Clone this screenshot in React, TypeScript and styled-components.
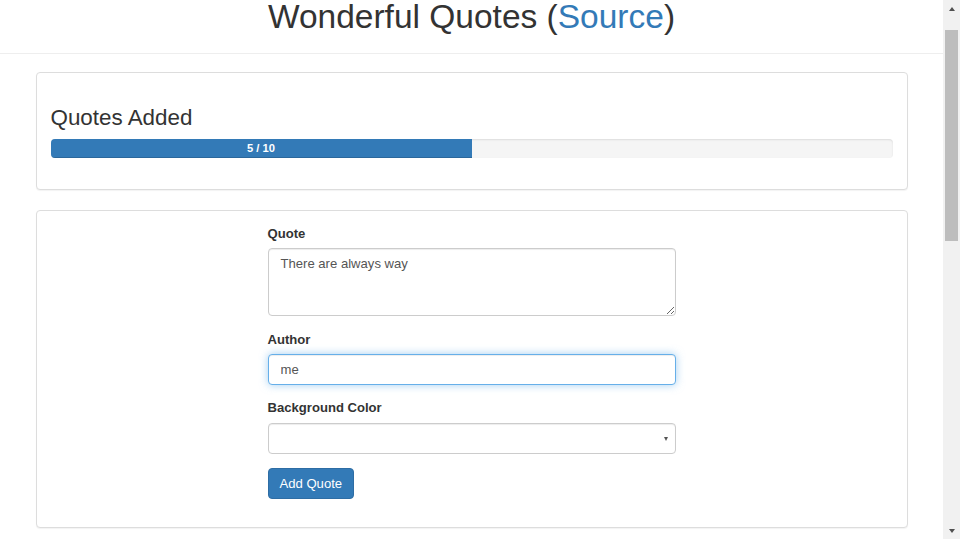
import React from 'react';
import styled, { createGlobalStyle, css } from 'styled-components';

const GlobalStyle = createGlobalStyle`
	html, body {
		margin: 0;
		padding: 0;
		height: 100%;
		overflow: hidden;
		background: #fff;
	}

	body {
		font-family: "Liberation Sans", Arial, sans-serif;
		font-size: 13.1px;
		line-height: 1.42857;
		color: #333;
	}

	#root {
		height: 100%;
	}

	*, *::before, *::after {
		box-sizing: border-box;
	}
`;

const Window = styled.div`
	display: flex;
	height: 100%;
`;

const Viewport = styled.div`
	flex: 1;
	min-width: 0;
	overflow: hidden;
`;

// the page in the shot is a bit scrolled, so draw the browser bar ourselves
const ScrollBar = styled.div`
	display: flex;
	flex-direction: column;
	width: 17px;
	flex-shrink: 0;
	background: #f1f1f1;
`;

const ScrollArrow = styled.div<{ $down?: boolean }>`
	display: flex;
	align-items: center;
	justify-content: center;
	height: 17px;
	flex-shrink: 0;

	&::before {
		content: '';
		margin-left: 1px;
		border-left: 3.5px solid transparent;
		border-right: 3.5px solid transparent;
		${({ $down }) => $down
		? css`border-top: 4px solid #505050;`
		: css`border-bottom: 4px solid #505050;`}
	}
`;

const ScrollTrack = styled.div`
	flex: 1;
	padding: 13px 2px 0 2px;
`;

const ScrollThumb = styled.div`
	height: 211px;
	background: #bdbdbd;
`;

const Header = styled.h1`
	margin: 0 0 18.5px;
	padding-bottom: 18.5px;
	border-bottom: 1px solid #eee;
	text-align: center;
	font-size: 33.5px;
	font-weight: 400;
	line-height: 34px;
	color: #333;

	a {
		color: #337ab7;
		text-decoration: none;
	}
`;

const Container = styled.div`
	max-width: 872px;
	margin: 0 auto;
`;

const Panel = styled.div`
	margin-bottom: 20px;
	background: #fff;
	border: 1px solid #ddd;
	border-radius: 4px;
	box-shadow: 0 1px 1px rgba(0, 0, 0, 0.05);
`;

const PanelBody = styled.div`
	padding: 14px;
`;

const SectionTitle = styled.h3`
	margin: 18.6px 0 8.8px;
	font-size: 22.4px;
	font-weight: 400;
	line-height: 1.1;
`;

const Progress = styled.div`
	height: 18.7px;
	margin-bottom: 17px;
	overflow: hidden;
	background: #f5f5f5;
	border-radius: 4px;
	box-shadow: inset 0 1px 2px rgba(0, 0, 0, 0.1);
`;

const ProgressFill = styled.div`
	height: 100%;
	background: #337ab7;
	color: #fff;
	text-align: center;
	font-size: 11.2px;
	font-weight: 700;
	line-height: 18.7px;
	box-shadow: inset 0 -1px 0 rgba(0, 0, 0, 0.15);
`;

const Form = styled.form`
	width: 408px;
	margin: 0 auto;
`;

const FormGroup = styled.div`
	margin-bottom: 14.4px;
`;

const Label = styled.label`
	display: block;
	margin-bottom: 4.7px;
	font-weight: 700;
	line-height: 18.7px;
`;

const fieldStyles = css`
	display: block;
	width: 100%;
	padding: 5.6px 12px;
	font-family: inherit;
	font-size: 13.1px;
	line-height: 18.7px;
	color: #555;
	background: #fff;
	border: 1px solid #ccc;
	border-radius: 4px;
	box-shadow: inset 0 1px 1px rgba(0, 0, 0, 0.075);
	outline: none;
`;

const TextArea = styled.textarea`
	${fieldStyles}
	height: 68px;
`;

const Input = styled.input<{ $focused?: boolean }>`
	${fieldStyles}
	height: 31px;

	${({ $focused }) => $focused && css`
		border-color: #66afe9;
		box-shadow: inset 0 1px 1px rgba(0, 0, 0, 0.075), 0 0 8px rgba(102, 175, 233, 0.6);
	`}
`;

const SelectWrap = styled.div`
	position: relative;

	&::after {
		content: '';
		position: absolute;
		right: 8px;
		top: 14px;
		border-left: 2.5px solid transparent;
		border-right: 2.5px solid transparent;
		border-top: 4px solid #555;
		pointer-events: none;
	}
`;

const Select = styled.select`
	${fieldStyles}
	height: 31px;
	appearance: none;
`;

const Button = styled.button`
	display: inline-block;
	height: 31px;
	padding: 0 11px;
	font-family: inherit;
	font-size: 13.1px;
	color: #fff;
	background: #337ab7;
	border: 1px solid #2e6da4;
	border-radius: 4px;
	cursor: pointer;
`;

const App: React.FC = () => {
	const added = 5;
	const max = 10;

	return (
		<Window>
			<GlobalStyle />
			<Viewport>
				<Header>
					Wonderful Quotes (<a href="#">Source</a>)
				</Header>
				<Container>
					<Panel>
						<PanelBody>
							<SectionTitle>Quotes Added</SectionTitle>
							<Progress>
								<ProgressFill style={{ width: `${(added / max) * 100}%` }}>
									{added} / {max}
								</ProgressFill>
							</Progress>
						</PanelBody>
					</Panel>
					<Panel>
						<PanelBody>
							<Form onSubmit={e => e.preventDefault()}>
								<FormGroup>
									<Label>Quote</Label>
									<TextArea rows={3} defaultValue="There are always way" />
								</FormGroup>
								<FormGroup>
									<Label>Author</Label>
									<Input $focused defaultValue="me" />
								</FormGroup>
								<FormGroup>
									<Label>Background Color</Label>
									<SelectWrap>
										<Select defaultValue="">
											<option value="" />
											<option value="red">Red</option>
											<option value="green">Green</option>
											<option value="blue">Blue</option>
										</Select>
									</SelectWrap>
								</FormGroup>
								<FormGroup>
									<Button type="submit">Add Quote</Button>
								</FormGroup>
							</Form>
						</PanelBody>
					</Panel>
				</Container>
			</Viewport>
			<ScrollBar>
				<ScrollArrow />
				<ScrollTrack>
					<ScrollThumb />
				</ScrollTrack>
				<ScrollArrow $down />
			</ScrollBar>
		</Window>
	);
};

export default App;
